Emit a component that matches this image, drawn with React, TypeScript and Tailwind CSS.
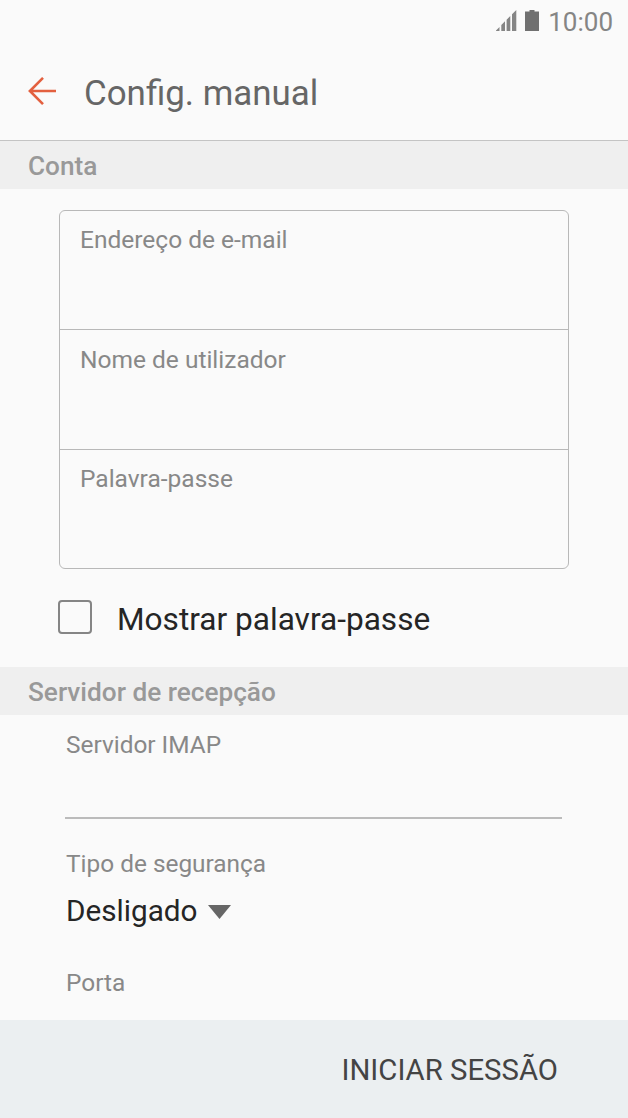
import type { ReactNode } from "react";

const accountFields = ["Endereço de e-mail", "Nome de utilizador", "Palavra-passe"];

export default function App() {
  return (
    <div className="flex h-[1118px] w-[628px] flex-col overflow-hidden bg-[#fafafa] font-[Roboto,sans-serif] text-[#888888]">
      <StatusBar />

      {/* App bar */}
      <header className="flex h-[97px] shrink-0 items-center border-b border-[#c4c4c4] pl-7">
        <BackArrow />
        <h1 className="ml-[28px] pt-[3px] text-[34.900px] leading-[40px] text-[#666666]">
          Config. manual
        </h1>
      </header>

      <main className="flex min-h-0 flex-1 flex-col">
        <SectionTitle>Conta</SectionTitle>

        <div className="mt-[21px] ml-[59px] h-[359px] w-[510px] shrink-0 divide-y divide-[#b8b8b8] rounded-[6px] border border-[#b8b8b8]">
          {accountFields.map((label) => (
            <label
              key={label}
              className="block h-[119.4px] pt-[14.200px] pl-5 text-[24.500px] leading-[30px]"
            >
              {label}
            </label>
          ))}
        </div>

        <div className="mt-[26px] flex h-[44px] shrink-0 items-center pl-[58px]">
          <span className="h-[34px] w-[34px] rounded-[4px] border-2 border-[#858585]" />
          <span className="ml-[25px] pt-[5px] text-[31.600px] leading-[40px] text-[#252525]">
            Mostrar palavra-passe
          </span>
        </div>

        <div className="mt-[28px] flex shrink-0 flex-col">
          <SectionTitle>Servidor de recepção</SectionTitle>
        </div>

        <div className="flex flex-col pl-[66px] text-[24.400px] leading-[30px]">
          <label className="mt-[15px]">Servidor IMAP</label>
          <div className="mt-[57px] -ml-px h-[2px] w-[497px] bg-[#bbbbbb]" />
          <label className="mt-[30px]">Tipo de segurança</label>
          <div className="mt-3 flex h-[40px] items-center text-[29.700px] leading-[40px] text-[#252525]">
            Desligado
            <svg className="mt-px ml-[11px] h-[14px] w-[23px]" viewBox="0 0 23 14" fill="#666666">
              <path d="M0 0h23L11.5 14z" />
            </svg>
          </div>
          <label className="mt-[37px]">Porta</label>
        </div>
      </main>

      <footer className="flex h-[98px] shrink-0 items-center justify-end bg-[#ebeff1] pr-[70px]">
        <button className="pt-px text-[29.300px] leading-[40px] text-[#444444]">
          INICIAR SESSÃO
        </button>
      </footer>
    </div>
  );
}

function StatusBar() {
  return (
    <div className="mb-px flex h-[43px] shrink-0 items-center justify-end pr-[15px] text-[#858585]">
      <svg className="mb-[2px] h-[21px] w-[21px]" viewBox="0 0 21 21" fill="currentColor">
        <path d="M0 21v-.5L3.500 17v4zM5.300 21v-6l3.700-3.700V21zM10.600 21V9.700L14.300 6v15zM16 21V4.300L20.300 0v21z" />
      </svg>
      <svg className="mb-[2px] ml-2 h-[21px] w-[14px]" viewBox="0 0 14 21" fill="#707070">
        <path d="M4.500 0h5v1.500H14V21H0V1.500h4.500z" />
      </svg>
      <span className="ml-[9px] text-[26px] leading-[30px]">10:00</span>
    </div>
  );
}

function BackArrow() {
  return (
    <svg
      className="mb-[3px] h-[28px] w-[28px]"
      viewBox="0 0 28 28"
      fill="none"
      stroke="#e3603f"
      strokeWidth="2.600"
    >
      <path d="M28 14H2M15 .900L1.900 14 15 27.100" />
    </svg>
  );
}

function SectionTitle({ children }: { children: ReactNode }) {
  return (
    <h2 className="flex h-[48px] shrink-0 items-center bg-[#efefef] pt-px pl-7 text-[26.200px] leading-[30px] font-medium text-[#999999]">
      {children}
    </h2>
  );
}
